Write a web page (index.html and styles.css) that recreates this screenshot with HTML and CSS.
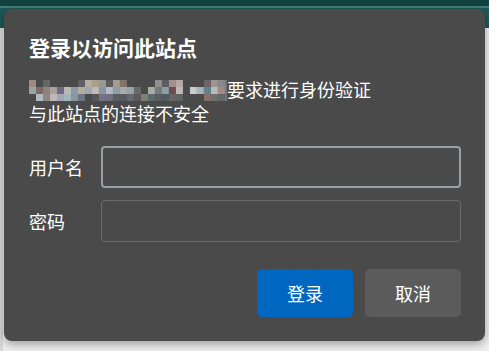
FILE: index.html
```html
<!DOCTYPE html>
<html lang="zh-CN">
<head>
  <meta charset="UTF-8">
  <meta name="viewport" content="width=device-width, initial-scale=1.0">
  <title>登录</title>
  <link rel="stylesheet" href="styles.css">
</head>
<body>
  <div class="page">
    <div class="topbar"></div>
    <div class="content"></div>
  </div>

  <div class="dialog">
    <h2 class="title">登录以访问此站点</h2>
    <p class="desc">
      <span class="host">
        <svg width="198" height="21" viewBox="0 0 28.3 3" preserveAspectRatio="none">
          <rect x="0" y="0" width="1" height="1" fill="#a08a86"/>
          <rect x="2" y="0" width="1" height="1" fill="#666"/>
          <rect x="7" y="0" width="1" height="1" fill="#5f6066"/>
          <rect x="8" y="0" width="1" height="1" fill="#b5aea4"/>
          <rect x="9" y="0" width="1" height="1" fill="#a9a08e"/>
          <rect x="10" y="0" width="1" height="1" fill="#9a9a94"/>
          <rect x="11" y="0" width="1" height="1" fill="#5c5c60"/>
          <rect x="12" y="0" width="1" height="1" fill="#a69b8e"/>
          <rect x="13" y="0" width="1" height="1" fill="#7f7468"/>
          <rect x="18" y="0" width="1" height="1" fill="#8f9090"/>
          <rect x="19" y="0" width="1" height="1" fill="#5b5d60"/>
          <rect x="20" y="0" width="1" height="1" fill="#a3908f"/>
          <rect x="21" y="0" width="1" height="1" fill="#b7a9a8"/>
          <rect x="25" y="0" width="1" height="1" fill="#6c6466"/>
          <rect x="26" y="0" width="1" height="1" fill="#9e9592"/>
          <rect x="27" y="0" width="1" height="1" fill="#8a8a8e"/>

          <rect x="0" y="1" width="1" height="1" fill="#9aa3a3"/>
          <rect x="1" y="1" width="1" height="1" fill="#7a6b67"/>
          <rect x="2" y="1" width="1" height="1" fill="#8d8379"/>
          <rect x="3" y="1" width="1" height="1" fill="#aaa29c"/>
          <rect x="4" y="1" width="1" height="1" fill="#6f6a80"/>
          <rect x="5" y="1" width="1" height="1" fill="#bcb8b2"/>
          <rect x="6" y="1" width="1" height="1" fill="#8b9aab"/>
          <rect x="7" y="1" width="1" height="1" fill="#b4ada2"/>
          <rect x="8" y="1" width="1" height="1" fill="#9fa7b3"/>
          <rect x="9" y="1" width="1" height="1" fill="#c0bcb0"/>
          <rect x="10" y="1" width="1" height="1" fill="#8596a8"/>
          <rect x="11" y="1" width="1" height="1" fill="#b6b8c6"/>
          <rect x="12" y="1" width="1" height="1" fill="#8e9ea6"/>
          <rect x="13" y="1" width="1" height="1" fill="#a8a9aa"/>
          <rect x="14" y="1" width="1" height="1" fill="#9aa4a6"/>
          <rect x="15" y="1" width="1" height="1" fill="#656a6e"/>
          <rect x="17" y="1" width="1" height="1" fill="#a7ada0"/>
          <rect x="18" y="1" width="1" height="1" fill="#767b7d"/>
          <rect x="19" y="1" width="1" height="1" fill="#8e9da6"/>
          <rect x="20" y="1" width="1" height="1" fill="#6e4c50"/>
          <rect x="21" y="1" width="1" height="1" fill="#c1b9b6"/>
          <rect x="23" y="1" width="1" height="1" fill="#c4cccc"/>
          <rect x="24" y="1" width="1" height="1" fill="#a9b2b4"/>
          <rect x="25" y="1" width="1" height="1" fill="#5f8190"/>
          <rect x="26" y="1" width="1" height="1" fill="#b4bcbc"/>
          <rect x="27" y="1" width="1" height="1" fill="#a68a86"/>

          <rect x="1" y="2" width="1" height="1" fill="#b0bcbe"/>
          <rect x="2" y="2" width="1" height="1" fill="#8f8582"/>
          <rect x="3" y="2" width="1" height="1" fill="#c0b8b6"/>
          <rect x="4" y="2" width="1" height="1" fill="#a3a7b4"/>
          <rect x="5" y="2" width="1" height="1" fill="#a1b6bc"/>
          <rect x="6" y="2" width="1" height="1" fill="#8a96a0"/>
          <rect x="7" y="2" width="1" height="1" fill="#6d7686"/>
          <rect x="9" y="2" width="1" height="1" fill="#56565c"/>
          <rect x="10" y="2" width="1" height="1" fill="#7a7088"/>
          <rect x="11" y="2" width="1" height="1" fill="#6e7280"/>
          <rect x="12" y="2" width="1" height="1" fill="#5a5c66"/>
          <rect x="13" y="2" width="1" height="1" fill="#565a62"/>
          <rect x="14" y="2" width="1" height="1" fill="#646a70"/>
          <rect x="15" y="2" width="1" height="1" fill="#5e5860"/>
          <rect x="16" y="2" width="1" height="1" fill="#7e8078"/>
          <rect x="17" y="2" width="1" height="1" fill="#5c6c6e"/>
          <rect x="18" y="2" width="1" height="1" fill="#595e5e"/>
          <rect x="19" y="2" width="1" height="1" fill="#505a60"/>
          <rect x="20" y="2" width="1" height="1" fill="#666"/>
          <rect x="21" y="2" width="1" height="1" fill="#5e6466"/>
          <rect x="25" y="2" width="1" height="1" fill="#85706a"/>
          <rect x="26" y="2" width="1" height="1" fill="#717070"/>
          <rect x="27" y="2" width="1" height="1" fill="#68686a"/>
          <rect x="28.05" y="0" width="0.2" height="3" fill="#8a8a8a"/>
        </svg>
      </span>要求进行身份验证<br>
      与此站点的连接不安全
    </p>

    <div class="form">
      <label class="label" for="user">用户名</label>
      <input class="field focus" id="user" type="text">
      <label class="label" for="pass">密码</label>
      <input class="field" id="pass" type="password">
    </div>

    <div class="actions">
      <button class="btn primary">登录</button>
      <button class="btn">取消</button>
    </div>
  </div>
</body>
</html>
```

FILE: styles.css
```css
html, body {
  margin: 0;
  height: 100%;
}

body {
  font-family: "Noto Sans CJK SC", "Noto Sans", sans-serif;
  background: #ececec;
  overflow: hidden;
}

.page {
  height: 100%;
}

.topbar {
  height: 28px;
  background: linear-gradient(#12423f 0, #12423f 6px, #467a76 6px, #467a76 8px, #1b5a56 8px);
}

.content {
  height: calc(100% - 28px);
  background: #efefef;
  border-left: 3px solid #d8d8d8;
}

.dialog {
  position: absolute;
  left: 4px;
  top: 9px;
  width: 481px;
  height: 332px;
  box-sizing: border-box;
  padding: 23px 24px 24px 25px;
  background: #4a4a4a;
  border-radius: 8px;
  box-shadow: 0 3px 10px rgba(0, 0, 0, 0.35);
  color: #fff;
  display: flex;
  flex-direction: column;
}

.title {
  margin: 0;
  font-size: 21px;
  line-height: 30px;
  font-weight: bold;
}

.desc {
  margin: 15px 0 0;
  font-size: 18px;
  line-height: 24px;
}

.host {
  display: inline-block;
  width: 198px;
  height: 21px;
  vertical-align: -4px;
}

.host svg {
  display: block;
}

.form {
  margin-top: 21px;
  display: grid;
  grid-template-columns: 72px 360px;
  row-gap: 12px;
  align-items: center;
}

.label {
  font-size: 18px;
}

.field {
  box-sizing: border-box;
  height: 42px;
  margin: 0;
  background: #4a4a4a;
  border: 1px solid #6c6c6c;
  border-radius: 4px;
  color: #fff;
  outline: none;
  font: inherit;
}

.field.focus {
  border: 2px solid #9a9fa5;
}

.actions {
  margin-top: auto;
  display: flex;
  justify-content: flex-end;
  gap: 12px;
}

.btn {
  width: 96px;
  height: 48px;
  border: none;
  border-radius: 5px;
  background: #5b5b5b;
  color: #fff;
  font-family: inherit;
  font-size: 18px;
}

.primary {
  background: #0067c0;
}
```
